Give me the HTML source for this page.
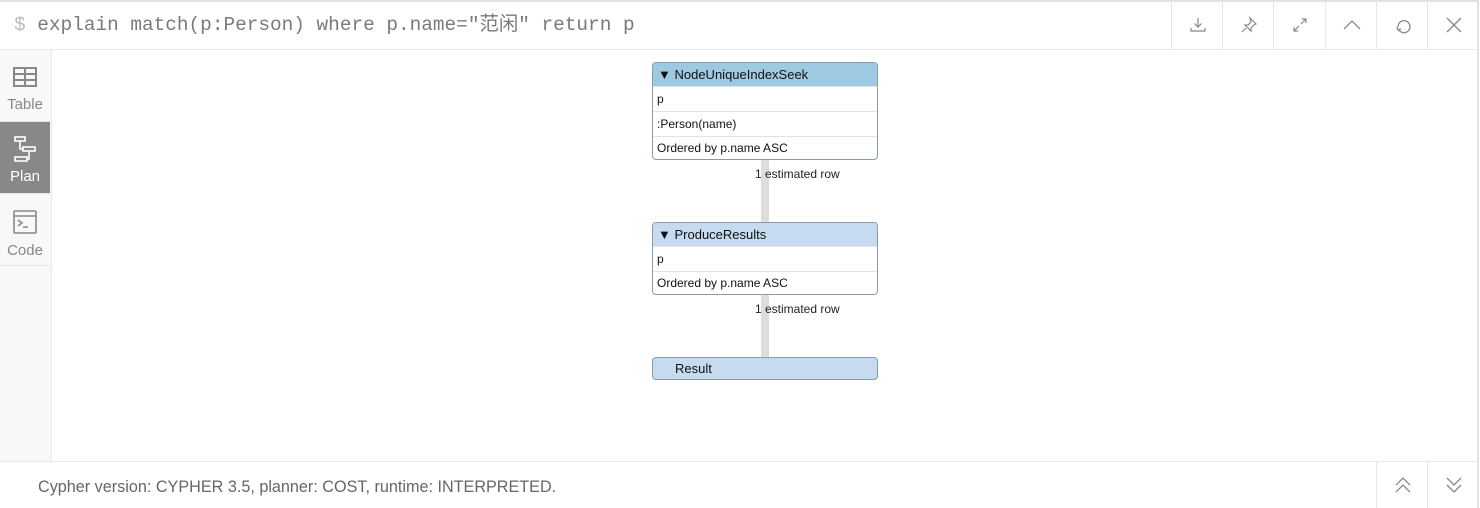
<!DOCTYPE html><html><head><style>
*{box-sizing:border-box;margin:0;padding:0}
body{width:1480px;height:508px;background:#fff;font-family:"Liberation Sans",sans-serif;position:relative;overflow:hidden}
.frame{position:absolute;left:0;top:0;width:1479px;height:508px;border-top:2px solid #dfe1e5;border-right:2px solid #dfe1e5}
.hdr{position:absolute;left:0;top:2px;width:1477px;height:48px;border-bottom:1px solid #e6e8ec}
.q{position:absolute;left:14px;top:5px;font-family:"Liberation Mono","Noto Sans CJK SC",monospace;font-size:19.4px;color:#7a7a7a;white-space:pre}
.q span{color:#bbb}
.btn{position:absolute;top:0;width:51px;height:48px;border-left:1px solid #e6e8ec}
.btn svg{position:absolute;left:16px;top:13px}
.side{position:absolute;left:0;top:50px;width:52px;height:411px;background:#f7f8fa;border-right:1px solid #e6e8ec}
.it{position:absolute;left:0;width:50px;height:72px;text-align:center;font-size:15px;color:#888;border-bottom:1px solid #e6e8ec}
.it svg{display:block;margin:16px auto 8px}
.it.on{background:#888;color:#fff}
.node{position:absolute;left:652px;width:226px;border:1px solid #8a9bb0;border-radius:4px;background:#fff;font-size:12px;color:#111;overflow:hidden}
.nh{height:23px;line-height:23px;padding-left:5px;font-size:13px}
.r{height:25px;line-height:25px;padding-left:4px;border-top:1px solid #e2e2e2}
.edge{position:absolute;left:761px;width:8px;background:#ddd}
.lab{position:absolute;left:755px;font-size:12px;color:#222}
.ftr{position:absolute;left:0;top:461px;width:1477px;height:47px;border-top:1px solid #e6e8ec}
.ftr .t{position:absolute;left:38px;top:16px;font-size:16.2px;color:#666}
</style></head><body>
<div class="frame"></div>
<div class="hdr">
<div class="q"><span>$</span> explain match(p:Person) where p.name="范闲" return p</div>
<div class="btn" style="left:1171px"><svg width="20" height="20" fill="none" stroke="#888" stroke-width="1.2"><path d="M10 3v9M6.5 8.5L10 12l3.5-3.5M3 13v3h14v-3"/></svg></div>
<div class="btn" style="left:1222px"><svg width="20" height="20" fill="none" stroke="#888" stroke-width="1.2"><path d="M11 3l6 6-2 1-3 3 0 3-6-6 3 0 3-3zM7 13l-4 4"/></svg></div>
<div class="btn" style="left:1273px"><svg width="20" height="20" fill="none" stroke="#888" stroke-width="1.2"><path d="M11 9l5-5M12 4h4v4M9 11l-5 5M4 12v4h4"/></svg></div>
<div class="btn" style="left:1325px"><svg width="20" height="20" fill="none" stroke="#888" stroke-width="1.3"><path d="M2 14l8-8 8 8"/></svg></div>
<div class="btn" style="left:1376px"><svg width="20" height="20" fill="none" stroke="#888" stroke-width="1.3"><path d="M6 15a6 6 0 1 0-1-3"/><path d="M4 12l1 3 3-1"/></svg></div>
<div class="btn" style="left:1427px"><svg width="20" height="20" fill="none" stroke="#888" stroke-width="1.3"><path d="M3 3l14 14M17 3L3 17"/></svg></div>
</div>
<div class="side">
<div class="it" style="top:0"><svg width="26" height="22" fill="none" stroke="#888" stroke-width="2" style="margin-top:16px"><rect x="2" y="2" width="22" height="18"/><path d="M2 8h22M2 14h22M13 2v18"/></svg>Table</div>
<div class="it on" style="top:72px"><svg width="28" height="28" fill="none" stroke="#fff" stroke-width="1.6" style="margin-top:13px;margin-bottom:5px"><rect x="4" y="2" width="10" height="4"/><rect x="12" y="12" width="12" height="4"/><rect x="4" y="22" width="12" height="4"/><path d="M9 6v8h3M18 16v8h-2"/></svg>Plan</div>
<div class="it" style="top:144px"><svg width="24" height="24" fill="none" stroke="#888" stroke-width="1.6"><rect x="1" y="1" width="22" height="22" rx="1"/><path d="M1 6h22M5 10l4 3-4 3M10 17h5"/></svg>Code</div>
</div>
<div class="edge" style="top:160px;height:62px"></div>
<div class="edge" style="top:295px;height:62px"></div>
<div class="lab" style="top:167px">1 estimated row</div>
<div class="lab" style="top:302px">1 estimated row</div>
<div class="node" style="top:62px;height:98px"><div class="nh" style="background:#9ecae1">▼ NodeUniqueIndexSeek</div><div class="r">p</div><div class="r">:Person(name)</div><div class="r" style="height:23px;line-height:23px">Ordered by p.name ASC</div></div>
<div class="node" style="top:222px;height:73px"><div class="nh" style="background:#c6dbef">▼ ProduceResults</div><div class="r">p</div><div class="r" style="height:23px;line-height:23px">Ordered by p.name ASC</div></div>
<div class="node" style="top:357px;height:23px;background:#c6dbef"><div class="nh" style="padding-left:22px;line-height:22px">Result</div></div>
<div class="ftr"><div class="t">Cypher version: CYPHER 3.5, planner: COST, runtime: INTERPRETED.</div>
<div class="btn" style="left:1376px;height:46px"><svg width="20" height="20" fill="none" stroke="#888" stroke-width="1.3"><path d="M3 10l7-7 7 7M3 17l7-7 7 7"/></svg></div>
<div class="btn" style="left:1427px;height:46px"><svg width="20" height="20" fill="none" stroke="#888" stroke-width="1.3"><path d="M3 3l7 7 7-7M3 10l7 7 7-7"/></svg></div>
</div>
</body></html>
